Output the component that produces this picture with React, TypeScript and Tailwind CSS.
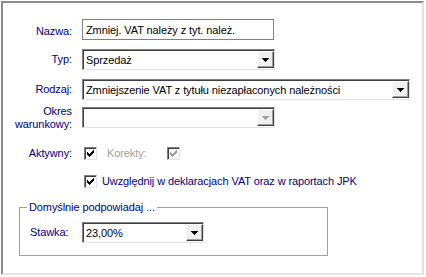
import React from "react";

const Arrow = ({ disabled = false }: { disabled?: boolean }) => (
  <svg width="7" height="4" viewBox="0 0 7 4" className="block">
    <path d="M0 0h7L3.5 4z" fill={disabled ? "#a0a0a0" : "#000"} shapeRendering="crispEdges" />
  </svg>
);

const Combo = ({ text, w, disabled = false }: { text: string; w: string; disabled?: boolean }) => (
  <div
    className={`${w} h-[21px] flex items-stretch border border-t-[#808080] border-l-[#808080] border-b-[#e3e3e3] border-r-[#e3e3e3] shadow-[inset_1px_1px_0_#404040] bg-white`}
  >
    <div className="flex-1 flex items-center pl-[3px] pt-[1px] text-black truncate">{text}</div>
    <div className="py-[1px] pr-[0px]">
      <div className="w-[17px] h-[17px] flex items-center justify-center bg-[#f0f0f0] border border-t-white border-l-white border-b-[#404040] border-r-[#404040] shadow-[inset_-1px_-1px_0_#a0a0a0]">
        <Arrow disabled={disabled} />
      </div>
    </div>
  </div>
);

const Check = ({ disabled = false }: { disabled?: boolean }) => (
  <div
    className={`w-[13px] h-[13px] flex items-center justify-center border border-t-[#808080] border-l-[#808080] border-b-[#e3e3e3] border-r-[#e3e3e3] shadow-[inset_1px_1px_0_#404040] ${
      disabled ? "bg-[#f4f4f4]" : "bg-white"
    }`}
  >
    <svg width="7" height="7" viewBox="0 0 7 7" className="block">
      <path
        d="M0 2h1v1h1v1h1v-1h1v-1h1v-1h1v-1h1v3h-1v1h-1v1h-1v1h-1v1h-1v-1h-1v-1h-1z"
        fill={disabled ? "#a0a0a0" : "#000"}
        shapeRendering="crispEdges"
      />
    </svg>
  </div>
);

const Label = ({ children }: { children: React.ReactNode }) => (
  <div className="w-[69px] text-right text-[#000080] leading-[13px] shrink-0">{children}</div>
);

export default function App() {
  return (
    <div
      className="w-[426px] h-[277px] bg-white pt-[1px] pl-[1px] text-[11px] leading-[13px] tracking-[-0.1px]"
      style={{ fontFamily: '"Liberation Sans", Arial, sans-serif' }}
    >
      <div className="w-[423px] h-[274px] border-2 border-t-[#8a8a8a] border-l-[#8a8a8a] border-b-[#e3e3e3] border-r-[#e3e3e3] bg-white pt-[16px] flex flex-col">
        {/* Nazwa */}
        <div className="flex items-center h-[21px]">
          <Label>
            <span className="relative top-[2px]">Nazwa:</span>
          </Label>
          <div className="ml-[10px] w-[192px] h-[21px] border border-[#808080] flex items-center pl-[3px] pt-[1px] text-black">
            Zmniej. VAT należy z tyt. należ.
          </div>
        </div>
        {/* Typ */}
        <div className="flex items-center h-[21px] mt-[9px]">
          <Label>Typ:</Label>
          <div className="ml-[10px]">
            <Combo text="Sprzedaż" w="w-[193px]" />
          </div>
        </div>
        {/* Rodzaj */}
        <div className="flex items-center h-[21px] mt-[9px]">
          <Label>Rodzaj:</Label>
          <div className="ml-[10px]">
            <Combo text="Zmniejszenie VAT z tytułu niezapłaconych należności" w="w-[328px]" />
          </div>
        </div>
        {/* Okres */}
        <div className="flex items-center h-[21px] mt-[7px]">
          <Label>
            Okres
            <br />
            warunkowy:
          </Label>
          <div className="ml-[10px]">
            <Combo text="" w="w-[193px]" disabled />
          </div>
        </div>
        {/* Aktywny */}
        <div className="flex items-center h-[13px] mt-[19px]">
          <Label>Aktywny:</Label>
          <div className="ml-[12px]">
            <Check />
          </div>
          <div className="ml-[10px] text-[#a0a0a0]">Korekty:</div>
          <div className="ml-[20px]">
            <Check disabled />
          </div>
        </div>
        {/* Uwzględnij */}
        <div className="flex items-center h-[13px] mt-[15px]">
          <div className="ml-[81px]">
            <Check />
          </div>
          <div className="ml-[5px] text-[#000080]">Uwzględnij w deklaracjach VAT oraz w raportach JPK</div>
        </div>
        {/* Group */}
        <fieldset className="ml-[16px] mt-[13px] w-[309px] border border-[#a0a0a0] pl-[10px] pt-[8px] pb-[12px]">
          <legend className="ml-[-3px] px-[2px] text-[#000080] leading-[13px]">Domyślnie podpowiadaj ...</legend>
          <div className="flex items-center h-[21px]">
            <div className="w-[52px] text-[#000080]">Stawka:</div>
            <Combo text="23,00%" w="w-[122px]" />
          </div>
        </fieldset>
      </div>
    </div>
  );
}
